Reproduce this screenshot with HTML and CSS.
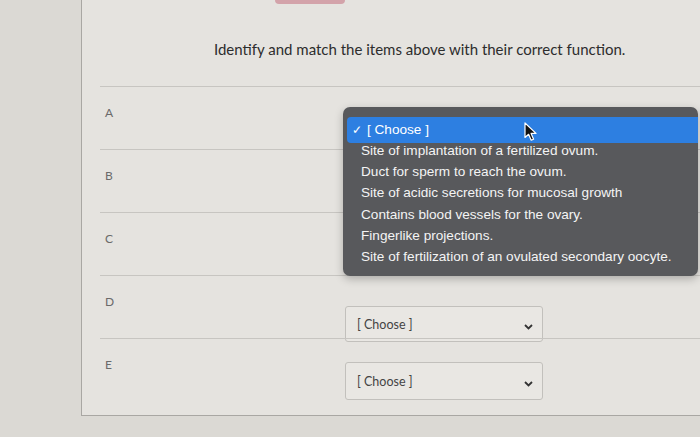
FILE: index.html
```html
<!DOCTYPE html>
<html lang="en">
<head>
    <meta charset="UTF-8">
    <title>Matching question</title>
    <link rel="stylesheet" href="styles.css">
</head>
<body>
    <div class="page">
        <div class="gutter"></div>
        <div class="card">
            <div class="figure-edge"></div>
            <p class="question">Identify and match the items above with their correct function.</p>

            <div class="answers">
                <div class="row">
                    <span class="label">A</span>
                </div>
                <div class="row">
                    <span class="label">B</span>
                </div>
                <div class="row">
                    <span class="label">C</span>
                </div>
                <div class="row">
                    <span class="label">D</span>
                    <div class="select select-d">
                        <span>[ Choose ]</span>
                        <svg class="chevron" width="9" height="6" viewBox="0 0 9 6"><path d="M1 1 L4.5 4.5 L8 1" fill="none" stroke="#333" stroke-width="1.8"/></svg>
                    </div>
                </div>
                <div class="row last">
                    <span class="label">E</span>
                    <div class="select select-e">
                        <span>[ Choose ]</span>
                        <svg class="chevron" width="9" height="6" viewBox="0 0 9 6"><path d="M1 1 L4.5 4.5 L8 1" fill="none" stroke="#333" stroke-width="1.8"/></svg>
                    </div>
                </div>
            </div>

            <!-- open native dropdown for row A -->
            <ul class="menu">
                <li class="selected"><span class="check">✓</span>[ Choose ]</li>
                <li>Site of implantation of a fertilized ovum.</li>
                <li>Duct for sperm to reach the ovum.</li>
                <li>Site of acidic secretions for mucosal growth</li>
                <li>Contains blood vessels for the ovary.</li>
                <li>Fingerlike projections.</li>
                <li>Site of fertilization of an ovulated secondary oocyte.</li>
            </ul>

            <svg class="cursor" width="14" height="20" viewBox="0 0 14 20">
                <path d="M1 1 L1 15.5 L4.6 12.3 L7.2 18.2 L9.6 17.2 L7.1 11.4 L12 11.4 Z" fill="#111" stroke="#fff" stroke-width="1.2" stroke-linejoin="round"/>
            </svg>
        </div>
    </div>
</body>
</html>
```

FILE: styles.css
```css
body {
    margin: 0;
    background-color: #dbd9d4;
    font-family: 'Lato', 'Liberation Sans', sans-serif;
}
.page {
    display: flex;
    height: 437px;
    overflow: hidden;
}
.gutter {
    width: 81px;
    flex-shrink: 0;
}
.card {
    position: relative;
    flex: 1;
    height: 416px;
    background-color: #e5e3df;
    border-left: 1px solid #a9a7a3;
    border-bottom: 1px solid #a9a7a3;
    box-sizing: border-box;
}
.figure-edge {
    width: 70px;
    height: 4px;
    margin-left: 193px;
    background-color: #d3a3aa;
    border-radius: 0 0 4px 4px;
}
.question {
    margin: 35px 0 0 132px;
    font-size: 15px;
    color: #2d2d2d;
    line-height: 20px;
}
.answers {
    margin: 27px 0 0 18px;
}
.row {
    position: relative;
    height: 63px;
    border-top: 1px solid #c7c5c1;
    box-sizing: border-box;
    padding: 19px 0 0 5px;
}
.label {
    display: block;
    font-size: 12px;
    line-height: 14px;
    color: #6a6a6a;
}
.select {
    display: flex;
    align-items: center;
    justify-content: space-between;
    width: 198px;
    height: 36px;
    margin: 0 0 0 240px;
    padding: 0 9px 0 11px;
    box-sizing: border-box;
    border: 1px solid #c2c0bc;
    border-radius: 3px;
    background-color: #e9e7e3;
    font-size: 12.5px;
    color: #444;
}
.select-d {
    margin-top: -3px;
}
.select-e {
    margin-top: -10px;
    height: 38px;
}
.chevron {
    margin-top: 6px;
}
.menu {
    position: absolute;
    left: 261px;
    top: 107px;
    width: 355px;
    height: 169px;
    margin: 0;
    padding: 10px 0 0 4px;
    box-sizing: border-box;
    list-style: none;
    background-color: #58595c;
    border-radius: 7px;
    box-shadow: 0 3px 8px rgba(0, 0, 0, 0.25);
    font-family: 'Liberation Sans', sans-serif;
    font-size: 13.6px;
    color: #f4f4f4;
}
.menu li {
    height: 21.2px;
    line-height: 21.2px;
    padding-left: 14px;
    white-space: nowrap;
}
.menu li.selected {
    height: 26px;
    line-height: 26px;
    margin-bottom: -3px;
    padding-left: 5px;
    background-color: #2d7fe1;
    border-radius: 4px 0 0 4px;
    color: #fff;
}
.check {
    display: inline-block;
    width: 15px;
    font-size: 12px;
}
.cursor {
    position: absolute;
    left: 442px;
    top: 122px;
}
```
